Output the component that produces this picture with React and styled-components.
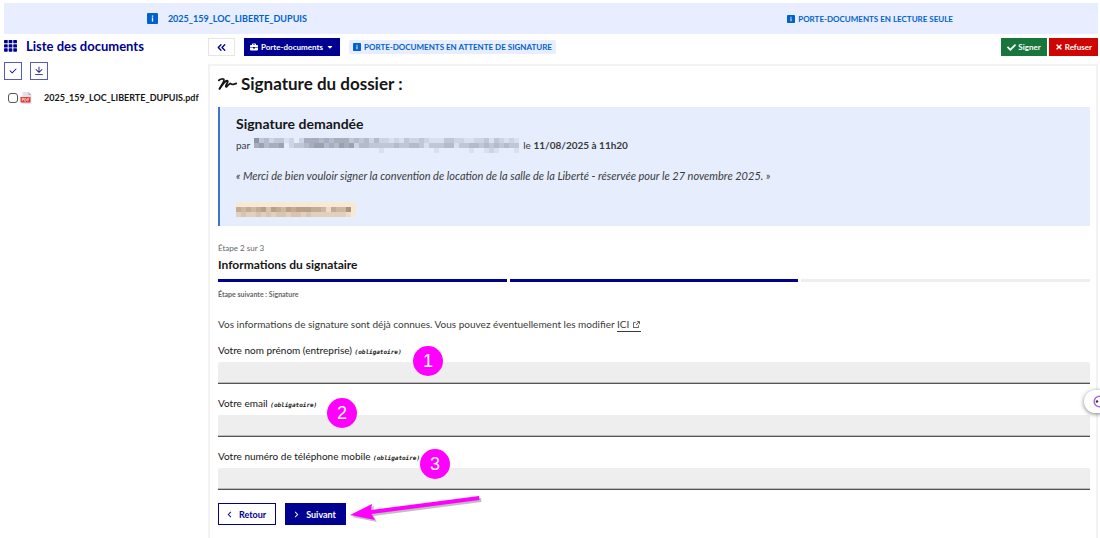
import styled, { createGlobalStyle } from "styled-components";
import { FaBriefcase, FaCaretDown, FaCheck, FaTimes } from "react-icons/fa";
import {
    RiArrowLeftSLine,
    RiArrowRightSLine,
    RiCheckLine,
    RiDownloadLine,
    RiExternalLinkLine,
} from "react-icons/ri";
import { ChevronsLeft } from "lucide-react";

const GlobalStyle = createGlobalStyle`
  :root {
    --blue-france: #000091;
    --info: #0063cb;
    --info-bg: #e8edff;
    --title: #161616;
    --text: #3a3a3a;
    --mention: #666666;
    --grey-bg: #eeeeee;
    --marker: #ff00ff;
  }

  * {
    box-sizing: border-box;
  }

  body {
    margin: 0;
    background: #fff;
    color: var(--text);
    font-family: Lato, "Liberation Sans", sans-serif;
    font-size: 10px;
    line-height: 16px;
  }

  h1, h2, h3, p {
    margin: 0;
  }

  button, input {
    font-family: inherit;
    margin: 0;
  }

  svg {
    flex-shrink: 0;
  }
`;

const Page = styled.div`
  padding: 3px 2px 0 4px;
`;

const Banner = styled.header`
  display: grid;
  grid-template-columns: 5fr 2fr 5fr;
  align-items: center;
  height: 31px;
  background: var(--info-bg);
  color: var(--info);
  font-weight: 700;
`;

const BannerName = styled.p`
  display: flex;
  align-items: center;
  justify-content: center;
  gap: 10px;
  padding-right: 10px;
  font-size: 9px;
`;

const BannerState = styled.p`
  grid-column: 3;
  display: flex;
  align-items: center;
  justify-content: center;
  gap: 3px;
  font-size: 8px;
`;

const Columns = styled.div`
  display: grid;
  grid-template-columns: 204px minmax(0, 1fr);
  padding-top: 4px;
`;

const Sidebar = styled.aside`
  white-space: nowrap;
`;

const SidebarTitle = styled.h2`
  display: flex;
  align-items: center;
  gap: 9px;
  color: var(--blue-france);
  font-size: 13px;
  line-height: 16px;
`;

const SidebarTools = styled.div`
  display: flex;
  gap: 8px;
  margin-top: 8px;
`;

const SquareButton = styled.button`
  display: flex;
  align-items: center;
  justify-content: center;
  width: 18px;
  height: 18px;
  padding: 0;
  border: 1px solid #5a5abc;
  background: #fff;
  color: var(--blue-france);
  font-size: 10px;
`;

const DocumentRow = styled.label`
  display: flex;
  align-items: center;
  margin-top: 10px;
  padding-left: 4px;
  color: var(--title);
  font-size: 9px;
  font-weight: 700;
`;

const Checkbox = styled.input`
  appearance: none;
  width: 10px;
  height: 10px;
  border: 1px solid #555;
  border-radius: 3px;
  background: #fff;
`;

const DocumentIcon = styled.svg`
  margin: 0 12px 0 2px;
`;

const Toolbar = styled.div`
  display: flex;
  align-items: center;
  height: 18px;
`;

const ToolButton = styled.button`
  display: flex;
  align-items: center;
  gap: 2px;
  height: 18px;
  padding: 0 6px;
  border: 0;
  background: ${(props) => props.$color};
  color: #fff;
  font-size: 8px;
  font-weight: 700;
`;

const CollapseButton = styled(ToolButton)`
  justify-content: center;
  width: 27px;
  margin-right: 9px;
  border: 1px solid #e5e5e5;
  color: var(--blue-france);
`;

const MenuButton = styled(ToolButton)`
  gap: 3px;
`;

const Badge = styled.span`
  display: flex;
  align-items: center;
  gap: 3px;
  height: 14px;
  margin-left: 9px;
  padding: 0 4px;
  border-radius: 2px;
  background: var(--info-bg);
  color: var(--info);
  font-size: 8px;
  font-weight: 700;
`;

const ToolbarEnd = styled.div`
  display: flex;
  gap: 2px;
  margin-left: auto;
`;

const Card = styled.main`
  margin-top: 8px;
  padding: 9px 6px 13px 8px;
  border: 2px solid #f3f3f3;
  border-bottom: 0;
`;

const CardTitle = styled.h1`
  display: flex;
  align-items: center;
  gap: 4px;
  color: var(--title);
  font-size: 17px;
  line-height: 18px;
`;

const Callout = styled.section`
  display: flex;
  flex-direction: column;
  margin-top: 14px;
  padding: 7px 16px 9px;
  border-left: 2px solid #3a77c9;
  background: #e6eefe;
`;

const CalloutTitle = styled.h2`
  color: var(--title);
  font-size: 14px;
  line-height: 20px;
`;

const Requester = styled.p`
  display: flex;
  align-items: center;
  gap: 4px;
  margin-top: 2px;
  line-height: 18px;
`;

const Message = styled.p`
  margin-top: 14px;
  font-size: 11px;
  font-style: italic;
`;

const Attachment = styled.div`
  display: flex;
  margin-top: 18px;
`;

const Stepper = styled.section`
  display: flex;
  flex-direction: column;
  margin-top: 14px;
`;

const StepCount = styled.p`
  color: var(--mention);
  font-size: 8px;
`;

const StepTitle = styled.h2`
  color: var(--title);
  font-size: 12px;
  line-height: 18px;
`;

const StepBars = styled.div`
  display: flex;
  gap: 3px;
  margin: 5px 0 4px;
`;

const StepBar = styled.span`
  flex: 1;
  height: 3px;
  background: ${(props) => (props.$done ? "var(--blue-france)" : "var(--grey-bg)")};
`;

const NextStep = styled.p`
  color: var(--mention);
  font-size: 7px;
`;

const Intro = styled.p`
  margin-top: 14px;
`;

const EditLink = styled.a`
  display: inline-flex;
  align-items: center;
  gap: 3px;
  height: 14px;
  border-bottom: 1px solid var(--text);
  color: inherit;
  text-decoration: none;
`;

const Form = styled.form`
  display: flex;
  flex-direction: column;
  gap: 11px;
  margin-top: 10px;
`;

const Field = styled.div`
  position: relative;
  display: flex;
  flex-direction: column;
  gap: 4px;
`;

const Label = styled.label`
  color: var(--title);
`;

const Required = styled.span`
  font-family: "DejaVu Sans Mono", "Liberation Mono", monospace;
  font-size: 6px;
  font-style: italic;
  font-weight: 700;
  line-height: 1;
`;

const Input = styled.input`
  width: 100%;
  height: 22px;
  padding: 0 8px;
  border: 0;
  border-radius: 3px 3px 0 0;
  background: var(--grey-bg);
  box-shadow: inset 0 -1px 0 #555, inset 0 -2px 0 #bbb;
`;

const Marker = styled.span`
  position: absolute;
  top: ${(props) => props.$top}px;
  left: ${(props) => props.$left}px;
  display: flex;
  align-items: center;
  justify-content: center;
  width: 30px;
  height: 30px;
  border-radius: 50%;
  background: var(--marker);
  color: #fff;
  font-family: "Liberation Sans", sans-serif;
  font-size: 18px;
`;

const Actions = styled.div`
  position: relative;
  display: flex;
  gap: 9px;
  margin-top: 2px;
`;

const ActionButton = styled.button`
  display: flex;
  align-items: center;
  gap: 4px;
  height: 22px;
  padding: 0 9px 0 5px;
  border: 1px solid var(--blue-france);
  background: ${(props) => (props.$primary ? "var(--blue-france)" : "#fff")};
  color: ${(props) => (props.$primary ? "#fff" : "var(--blue-france)")};
  font-size: 9px;
  font-weight: 700;
`;

const Arrow = styled.svg`
  position: absolute;
  top: -10px;
  left: 130px;
`;

const SideHandle = styled.button`
  position: fixed;
  top: 390px;
  right: -10px;
  display: flex;
  align-items: center;
  width: 26px;
  height: 23px;
  padding: 0 0 0 9px;
  border: 0;
  border-radius: 12px;
  background: #fff;
  box-shadow: 0 1px 4px rgba(0, 0, 0, 0.5);
`;

const NAME_MASK = [
    "73423312025554545553434242212132232111332211223132121",
    "56455602334566454656244333334334431333441334434343433",
    "00000000000000000000000001000000000010000001001210001",
];

const FILE_MASK = [
    "000000000000000000000000",
    "545456365465666554154470",
    "232232323323323222222210",
];

const steps = [true, true, false];

const fields = [
    { id: "name", label: "Votre nom prénom (entreprise)", marker: { top: 4, left: 195 } },
    { id: "email", label: "Votre email", type: "email", marker: { top: 3, left: 109 } },
    { id: "phone", label: "Votre numéro de téléphone mobile", type: "tel", marker: { top: 1, left: 202 } },
];

function InfoIcon({ size }) {
    return (
        <svg width={size} height={size} viewBox="0 0 12 12" aria-hidden="true">
            <rect width="12" height="12" rx="1.2" fill="#0063cb" />
            <path d="M5.3 2.6h1.4V4H5.3zM5.3 5h1.4v4.4H5.3z" fill="#fff" />
        </svg>
    );
}

function GridIcon() {
    const cells = [0, 5, 10];
    return (
        <svg width="13" height="12" viewBox="0 0 14 13" fill="#000091" aria-hidden="true">
            {cells.map((y) => cells.map((x) => <rect key={`${x}-${y}`} x={x} y={y * 0.9} width="4" height="3.6" rx="0.6" />))}
        </svg>
    );
}

function PdfIcon() {
    return (
        <DocumentIcon width="12" height="12" viewBox="0 0 24 24" aria-hidden="true">
            <path d="M5 0h12l6 6v18H5z" fill="#dfe3e8" />
            <path d="M17 0l6 6h-6z" fill="#aab2bd" />
            <rect x="1" y="10" width="20" height="11" rx="1" fill="#e2352b" />
            <path
                d="M4.5 18.5v-6H7v3H4.5M9.5 12.5H11l1.5 1.5v3L11 18.5H9.5zM15.5 18.5v-6h3M15.5 15.5H18"
                fill="none"
                stroke="#fff"
                strokeWidth="1.3"
            />
        </DocumentIcon>
    );
}

function SignatureIcon() {
    return (
        <svg width="19" height="12" viewBox="0 0 19 12" fill="none" stroke="#161616" strokeLinecap="round" strokeLinejoin="round" aria-hidden="true">
            <path d="M.8 2.4C2 1 5.8.2 6 1.8 6.2 3.5 3.6 7.2 1.6 10.8" strokeWidth="1.7" />
            <path d="M1.6 10.8C4 6.800 7.8 2.200 9.400 2.800c1.500.7-2.300 4.600-1.500 5.900.8.9 2.700-2.600 4.100-3.200 1-.3.9 1 2.200.9 1.400 0 2.600-.6 4.100-1" strokeWidth="1.8" />
        </svg>
    );
}

function Mosaic({ rows, color, label, background }) {
    const width = rows[0].length * 5;
    const height = rows.length * 5;
    return (
        <svg width={width} height={height} viewBox={`0 0 ${width} ${height}`} shapeRendering="crispEdges" role="img" aria-label={label}>
            {background && <rect width={width} height={height} fill={background} />}
            {rows.map((row, y) =>
                [...row].map((level, x) => (
                    <rect key={`${x}-${y}`} x={x * 5} y={y * 5} width="5" height="5" fill={color} opacity={Number(level) * 0.1} />
                ))
            )}
        </svg>
    );
}

function App() {
    return (
        <Page>
            <GlobalStyle />
            <Banner>
                <BannerName>
                    <InfoIcon size={11} />
                    2025_159_LOC_LIBERTE_DUPUIS
                </BannerName>
                <BannerState>
                    <InfoIcon size={8} />
                    PORTE-DOCUMENTS EN LECTURE SEULE
                </BannerState>
            </Banner>

            <Columns>
                <Sidebar>
                    <SidebarTitle>
                        <GridIcon />
                        Liste des documents
                    </SidebarTitle>
                    <SidebarTools>
                        <SquareButton type="button" aria-label="Tout sélectionner">
                            <RiCheckLine />
                        </SquareButton>
                        <SquareButton type="button" aria-label="Télécharger">
                            <RiDownloadLine />
                        </SquareButton>
                    </SidebarTools>
                    <DocumentRow>
                        <Checkbox type="checkbox" />
                        <PdfIcon />
                        2025_159_LOC_LIBERTE_DUPUIS.pdf
                    </DocumentRow>
                </Sidebar>

                <div>
                    <Toolbar>
                        <CollapseButton type="button" $color="#fff" aria-label="Replier la liste">
                            <ChevronsLeft size={13} strokeWidth={2.5} />
                        </CollapseButton>
                        <MenuButton type="button" $color="#000091">
                            <FaBriefcase size={8} />
                            Porte-documents
                            <FaCaretDown size={8} />
                        </MenuButton>
                        <Badge>
                            <InfoIcon size={8} />
                            PORTE-DOCUMENTS EN ATTENTE DE SIGNATURE
                        </Badge>
                        <ToolbarEnd>
                            <ToolButton type="button" $color="#18753c">
                                <FaCheck size={9} />
                                Signer
                            </ToolButton>
                            <ToolButton type="button" $color="#ce0500">
                                <FaTimes size={8} />
                                Refuser
                            </ToolButton>
                        </ToolbarEnd>
                    </Toolbar>

                    <Card>
                        <CardTitle>
                            <SignatureIcon />
                            Signature du dossier :
                        </CardTitle>

                        <Callout>
                            <CalloutTitle>Signature demandée</CalloutTitle>
                            <Requester>
                                par
                                <Mosaic rows={NAME_MASK} color="#68707f" label="Demandeur masqué" />
                                <span>
                                    le <strong>11/08/2025 à 11h20</strong>
                                </span>
                            </Requester>
                            <Message>
                                « Merci de bien vouloir signer la convention de location de la salle de la Liberté - réservée pour le 27 novembre 2025. »
                            </Message>
                            <Attachment>
                                <Mosaic rows={FILE_MASK} color="#8d6f55" background="#f8e9d6" label="Adresse masquée" />
                            </Attachment>
                        </Callout>

                        <Stepper>
                            <StepCount>Étape 2 sur 3</StepCount>
                            <StepTitle>Informations du signataire</StepTitle>
                            <StepBars>
                                {steps.map((done, i) => (
                                    <StepBar key={i} $done={done} />
                                ))}
                            </StepBars>
                            <NextStep>
                                <strong>Étape suivante : Signature</strong>
                            </NextStep>
                        </Stepper>

                        <Intro>
                            Vos informations de signature sont déjà connues. Vous pouvez éventuellement les modifier{" "}
                            <EditLink href="#modifier">
                                ICI <RiExternalLinkLine size={9} />
                            </EditLink>
                        </Intro>

                        <Form>
                            {fields.map(({ id, label, type = "text", marker }, i) => (
                                <Field key={id}>
                                    <Label htmlFor={id}>
                                        {label} <Required>(obligatoire)</Required>
                                    </Label>
                                    <Input id={id} type={type} disabled />
                                    <Marker $top={marker.top} $left={marker.left}>
                                        {i + 1}
                                    </Marker>
                                </Field>
                            ))}
                            <Actions>
                                <ActionButton type="button">
                                    <RiArrowLeftSLine size={11} />
                                    Retour
                                </ActionButton>
                                <ActionButton type="button" $primary>
                                    <RiArrowRightSLine size={11} />
                                    Suivant
                                </ActionButton>
                                <Arrow width="140" height="34" viewBox="0 0 140 34" aria-hidden="true">
                                    <g transform="translate(2 2)" fill="#000" opacity="0.25">
                                        <path d="M2 22l22-11-1 6 108-14 .5 4-108 14 3.5 6z" />
                                    </g>
                                    <path d="M2 22l22-11-1 6 108-14 .5 4-108 14 3.5 6z" fill="#ff00ff" />
                                </Arrow>
                            </Actions>
                        </Form>
                    </Card>
                </div>
            </Columns>

            <SideHandle type="button" aria-label="Ouvrir l'assistant">
                <svg width="13" height="13" viewBox="0 0 13 13" fill="none" aria-hidden="true">
                    <circle cx="6.5" cy="6.5" r="5.3" stroke="#a36be0" strokeWidth="1.5" />
                    <circle cx="4" cy="6.5" r="1.2" fill="#333" />
                </svg>
            </SideHandle>
        </Page>
    );
}

export default App;
